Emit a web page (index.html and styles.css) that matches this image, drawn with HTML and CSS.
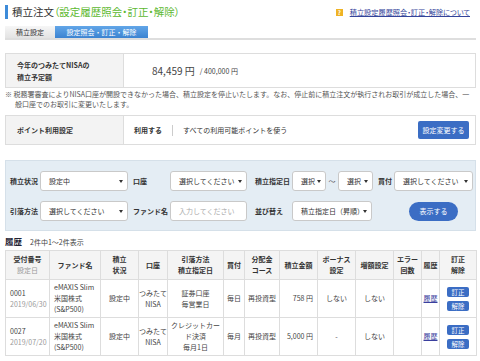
FILE: index.html
```html
<!DOCTYPE html>
<html lang="ja">
<head>
  <meta charset="UTF-8">
  <meta name="viewport" content="width=device-width, initial-scale=1.0">
  <title>積立注文（設定履歴照会・訂正・解除）</title>
  <link rel="stylesheet" href="styles.css">
</head>
<body>
  <div class="page-head">
    <h1 class="title">積立注文<span class="title-sub">（設定履歴照会・訂正・解除）</span></h1>
    <a class="help-link" href="#"><span class="help-icon">?</span><span class="help-text">積立設定履歴照会・訂正・解除について</span></a>
  </div>

  <ul class="tabs">
    <li class="tab">積立設定</li>
    <li class="tab active">設定照会・訂正・解除</li>
  </ul>

  <div class="info-box nisa">
    <div class="info-label">今年のつみたてNISAの<br>積立予定額</div>
    <div class="info-value">
      <span class="amount">84,459 円</span>
      <span class="amount-max">/ 400,000 円</span>
    </div>
  </div>
  <p class="note">※ 税務署審査によりNISA口座が開設できなかった場合、積立設定を停止いたします。なお、停止前に積立注文が執行されお取引が成立した場合、一般口座でのお取引に変更いたします。</p>

  <div class="info-box points">
    <div class="info-label">ポイント利用設定</div>
    <div class="info-value">
      <strong>利用する</strong>
      <span class="sep"></span>
      <span>すべての利用可能ポイントを使う</span>
      <button class="btn" type="button">設定変更する</button>
    </div>
  </div>

  <form class="filter">
    <div class="filter-row">
      <label class="filter-label w30">積立状況</label>
      <div class="select w88">設定中</div>
      <label class="filter-label w37 ml5">口座</label>
      <div class="select w77">選択してください</div>
      <label class="filter-label w37 ml8">積立指定日</label>
      <div class="select w34">選択</div>
      <span class="tilde">〜</span>
      <div class="select w35">選択</div>
      <label class="filter-label w16 ml5">買付</label>
      <div class="select w79">選択してください</div>
    </div>
    <div class="filter-row">
      <label class="filter-label w30">引落方法</label>
      <div class="select w88">選択してください</div>
      <label class="filter-label w37 ml5">ファンド名</label>
      <div class="text-input w77">入力してください</div>
      <label class="filter-label w37 ml8">並び替え</label>
      <div class="select w80">積立指定日（昇順）</div>
      <button class="btn btn-round" type="button">表示する</button>
    </div>
  </form>

  <div class="history-head">
    <h2 class="history-title">履歴</h2>
    <span class="history-count">2件中1～2件表示</span>
  </div>

  <table class="history">
    <colgroup>
      <col style="width:44px"><col style="width:51px"><col style="width:38px"><col style="width:29px">
      <col style="width:56px"><col style="width:21px"><col style="width:35px"><col style="width:38px">
      <col style="width:38px"><col style="width:38px"><col style="width:28px"><col style="width:18px">
      <col style="width:37px">
    </colgroup>
    <thead>
      <tr>
        <th>受付番号<br><span class="sub">設定日</span></th>
        <th>ファンド名</th>
        <th>積立<br>状況</th>
        <th>口座</th>
        <th>引落方法<br>積立指定日</th>
        <th>買付</th>
        <th>分配金<br>コース</th>
        <th>積立金額</th>
        <th>ボーナス<br>設定</th>
        <th>増額設定</th>
        <th>エラー<br>回数</th>
        <th class="tight">履歴</th>
        <th>訂正<br>解除</th>
      </tr>
    </thead>
    <tbody>
      <tr>
        <td class="left">0001<br><span class="sub">2019/06/30</span></td>
        <td class="left">eMAXIS Slim<br>米国株式<br>(S&amp;P500)</td>
        <td>設定中</td>
        <td class="tight">つみたて<br>NISA</td>
        <td>証券口座<br>毎営業日</td>
        <td>毎日</td>
        <td>再投資型</td>
        <td class="right">758 円</td>
        <td>しない</td>
        <td>しない</td>
        <td></td>
        <td class="tight"><a class="link" href="#">履歴</a></td>
        <td><span class="btn-mini">訂正</span><span class="btn-mini">解除</span></td>
      </tr>
      <tr>
        <td class="left">0027<br><span class="sub">2019/07/20</span></td>
        <td class="left">eMAXIS Slim<br>米国株式<br>(S&amp;P500)</td>
        <td>設定中</td>
        <td class="tight">つみたて<br>NISA</td>
        <td>クレジットカード決済<br>毎月1日</td>
        <td>毎月</td>
        <td>再投資型</td>
        <td class="right">5,000 円</td>
        <td>-</td>
        <td>しない</td>
        <td></td>
        <td class="tight"><a class="link" href="#">履歴</a></td>
        <td><span class="btn-mini">訂正</span><span class="btn-mini">解除</span></td>
      </tr>
    </tbody>
  </table>
</body>
</html>
```

FILE: styles.css
```css
body { margin: 0; padding: 0 4px 0 5px; font-family: "Noto Sans CJK JP", "Noto Sans", sans-serif; font-size: 7px; line-height: 10px; color: #333; background: #fff; overflow: hidden; }

.page-head { display: flex; justify-content: space-between; align-items: center; padding-top: 5px; }
.title { margin: 0; padding-left: 4px; border-left: 3px solid #3d8bd9; font-size: 10.5px; line-height: 14px; font-weight: normal; color: #333; font-feature-settings: "palt"; }
.title-sub { color: #5cb82f; }
.help-link { display: flex; align-items: center; gap: 7px; margin-right: 6px; color: #34449a; text-decoration: none; font-size: 7.2px; font-feature-settings: "palt"; }
.help-text { text-decoration: underline; }
.help-icon { width: 7px; height: 7px; background: #efb324; color: #fff; font-size: 6px; line-height: 7px; font-weight: bold; text-align: center; }

.tabs { display: flex; margin: 7px 0 0; padding: 0; list-style: none; border-bottom: 2px solid #dedede; }
.tab { width: 50px; height: 12px; line-height: 12px; text-align: center; background: linear-gradient(#f6f6f6, #e3e3e3); color: #333; }
.tab.active { width: 93px; background: linear-gradient(#62a6e8, #3b83d1); color: #fff; }

.info-box { display: flex; border: 1px solid #ddd; box-sizing: border-box; }
.info-box.nisa { margin-top: 13px; height: 35px; }
.info-box.points { margin-top: 6px; height: 30px; }
.info-label { flex: 0 0 118px; box-sizing: border-box; display: flex; align-items: center; padding-left: 11px; background: #f3f3f3; border-right: 1px solid #ddd; font-weight: bold; line-height: 12px; }
.info-value { flex: 1; display: flex; align-items: center; }
.nisa .info-value { padding-left: 28px; }
.points .info-value { padding-left: 10px; }
.amount { font-size: 10px; color: #444; }
.amount-max { margin-left: 5px; color: #444; }
.sep { width: 1px; height: 11px; margin: 0 10px; background: #ccc; }

.note { margin: 1px 0 0; padding-left: 10px; text-indent: -10px; color: #555; }

.btn { border: none; border-radius: 2px; background: #3b6dc4; color: #fff; font-family: inherit; font-size: 7px; cursor: pointer; }
.points .btn { margin-left: auto; margin-right: 6px; width: 51px; height: 18px; padding: 0; }
.btn-round { margin-left: 37px; width: 49px; height: 19px; padding: 0; border-radius: 10px; }

.filter { margin-top: 15px; height: 71px; box-sizing: border-box; padding: 10px 0 0 4px; background: #e4edf4; border: 1px solid #d5e0e9; }
.filter-row { display: flex; align-items: center; height: 20px; }
.filter-row + .filter-row { margin-top: 10px; }
.filter-label { flex: none; font-weight: bold; color: #333; }
.select, .text-input { flex: none; position: relative; height: 20px; box-sizing: border-box; padding-left: 8px; line-height: 18px; background: #fff; border: 1px solid #c9c9c9; border-radius: 3px; white-space: nowrap; overflow: hidden; }
.select::after { content: ""; position: absolute; right: 4px; top: 8px; border-top: 3px solid #333; border-left: 2px solid transparent; border-right: 2px solid transparent; }
.text-input { color: #aaa; }
.tilde { flex: none; width: 12px; text-align: center; color: #555; }
.w16 { width: 16px; } .w30 { width: 30px; } .w34 { width: 34px; } .w35 { width: 35px; } .w37 { width: 37px; }
.w77 { width: 77px; } .w79 { width: 79px; } .w80 { width: 80px; } .w88 { width: 88px; }
.ml5 { margin-left: 5px; } .ml8 { margin-left: 8px; }

.history-head { display: flex; align-items: baseline; gap: 8px; margin-top: 4px; }
.history-title { margin: 0; font-size: 8.5px; line-height: 12px; color: #223; }
.history-count { color: #444; }

.history { margin-top: 3px; width: 471px; border-collapse: collapse; table-layout: fixed; }
.history th, .history td { border: 1px solid #ddd; padding: 0 2px; text-align: center; vertical-align: middle; line-height: 11px; }
.history th { height: 28px; background: #f4f4f4; font-weight: bold; color: #333; }
.history td { height: 37px; color: #444; }
.history td.left { text-align: left; padding-left: 4px; }
.history td.right { text-align: right; padding-right: 4px; }
.history .tight { padding: 0; }
.sub { font-weight: normal; color: #999; }
.link { color: #3a3f9e; text-decoration: underline; }
.btn-mini { display: block; width: 22px; height: 10px; margin: 0 auto; line-height: 10px; border-radius: 2px; background: #3b6dc4; color: #fff; font-size: 6.5px; }
.btn-mini + .btn-mini { margin-top: 4px; }
```
